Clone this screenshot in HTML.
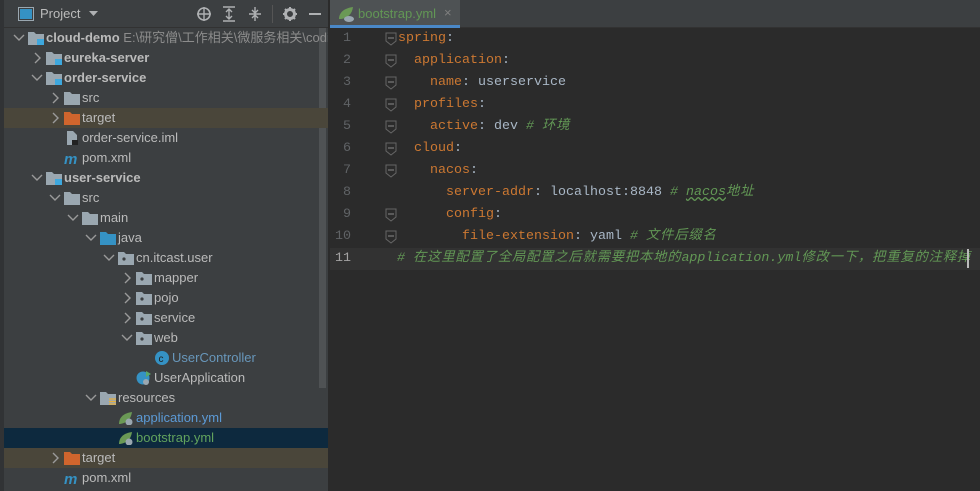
<!DOCTYPE html>
<html><head><meta charset="utf-8"><style>
*{margin:0;padding:0;box-sizing:border-box}
body{width:980px;height:491px;overflow:hidden;background:#2b2b2b;position:relative;font-family:"Liberation Sans","Noto Sans CJK SC",sans-serif}
#side{position:absolute;left:0;top:0;width:328px;height:491px;background:#3c3f41;overflow:hidden}
#strip{position:absolute;left:0;top:0;width:4px;height:491px;background:#313335}
#hdr{position:absolute;left:4px;top:0;width:324px;height:28px;border-bottom:1px solid #323232}
.r{position:absolute;left:4px;width:324px;height:20px;font-size:13px;color:#bbbbbb;line-height:20px;white-space:nowrap}
.r .a{position:absolute;top:0;width:12px;height:20px}
.r .i{position:absolute;top:3px;width:16px;height:14px}
.r .t{position:absolute;top:0}
.b{font-weight:bold}
#ed{position:absolute;left:330px;top:0;width:650px;height:491px}
#tabs{position:absolute;left:0;top:0;width:650px;height:28px;background:#3c3f41;border-bottom:1px solid #323232}
#tab{position:absolute;left:0;top:0;width:130px;height:28px;background:#4e5254}
#tab .ul{position:absolute;left:0;bottom:0;width:130px;height:3px;background:#4a88c7}
.ln{position:absolute;left:0;width:21px;text-align:right;font-family:"Liberation Mono",monospace;font-size:13.33px;color:#606366;line-height:22px}
.cd{position:absolute;left:68px;font-family:"Liberation Mono","Noto Sans CJK SC",monospace;font-size:13.33px;color:#a9b7c6;line-height:22px;white-space:pre}
.k{color:#cc7832}.c{color:#629755;font-style:italic}
.z{letter-spacing:0.8px}
</style></head><body>
<div id="side">
<div id="strip"></div>
<div id="hdr">
<svg style="position:absolute;left:14px;top:7px" width="16" height="14"><rect x="0.5" y="0.5" width="15" height="13" fill="none" stroke="#9aa7b0"/><rect x="2" y="2" width="12" height="10" fill="#3592c4"/></svg>
<span style="position:absolute;left:36px;top:6px;font-size:13px;color:#bbb">Project</span>
<svg style="position:absolute;left:85px;top:11px" width="10" height="6"><path d="M0 0h9l-4.5 5z" fill="#afb1b3"/></svg>
<svg style="position:absolute;left:192px;top:6px" width="16" height="16"><circle cx="8" cy="8" r="6" fill="none" stroke="#afb1b3" stroke-width="1.6"/><path d="M8 1v14M1 8h14" stroke="#afb1b3" stroke-width="1.4"/></svg>
<svg style="position:absolute;left:218px;top:6px" width="14" height="16"><path d="M1 1h12M1 15h12M7 4v8M4 6l3-3 3 3M4 10l3 3 3-3" stroke="#afb1b3" stroke-width="1.4" fill="none"/></svg>
<svg style="position:absolute;left:244px;top:6px" width="14" height="16"><path d="M1 8h12M7 1v5M4 4l3 3 3-3M7 15v-5M4 12l3-3 3 3" stroke="#afb1b3" stroke-width="1.4" fill="none"/></svg>
<div style="position:absolute;left:268px;top:5px;width:1px;height:18px;background:#555"></div>
<svg style="position:absolute;left:278px;top:6px" width="16" height="16"><circle cx="8" cy="8" r="4.5" fill="none" stroke="#afb1b3" stroke-width="3"/><path d="M8 1v3M8 12v3M1 8h3M12 8h3M3 3l2 2M11 11l2 2M13 3l-2 2M3 13l2-2" stroke="#afb1b3" stroke-width="2"/><circle cx="8" cy="8" r="1.8" fill="#3c3f41"/></svg>
<div style="position:absolute;left:305px;top:13px;width:12px;height:2px;background:#afb1b3"></div>
</div>
<div style="position:absolute;left:319px;top:28px;width:7px;height:360px;background:#4f5254"></div>
<div id="tree"></div>
</div>
<div id="ed">
<div id="tabs"><div id="tab">
<svg style="position:absolute;left:8px;top:6px" width="18" height="16"><path d="M1 13C1 6 7 2 15 1c-1 7-5 11-12 12z" fill="#6a9955"/><ellipse cx="11" cy="13" rx="5" ry="3" fill="#9aa7b0"/></svg>
<span style="position:absolute;left:28px;top:6px;font-size:13px;color:#629755">bootstrap.yml</span>
<span style="position:absolute;left:114px;top:5px;font-size:13px;color:#7f7f7f">×</span>
<div class="ul"></div></div></div>
<div style="position:absolute;left:0;top:248px;width:650px;height:22px;background:#323232"></div>
<div id="code"></div>
<div style="position:absolute;left:637px;top:249px;width:2px;height:19px;background:#bbb"></div>
</div>
<script>
var rows=[
[0,'d','mod','cloud-demo',1],[1,'r','mod','eureka-server',1],[1,'d','mod','order-service',1],
[2,'r','fold','src'],[2,'r','tgt','target',0,'#4a463a'],[2,'','iml','order-service.iml'],[2,'','m','pom.xml'],
[1,'d','mod','user-service',1],[2,'d','fold','src'],[3,'d','fold','main'],[4,'d','java','java'],
[5,'d','pkg','cn.itcast.user'],[6,'r','pkg','mapper'],[6,'r','pkg','pojo'],[6,'r','pkg','service'],[6,'d','pkg','web'],
[7,'','cls','UserController',0,0,'#6897bb'],[6,'','app','UserApplication'],[4,'d','res','resources'],
[5,'','spr','application.yml',0,0,'#5c9ad6'],[5,'','spr','bootstrap.yml',0,'#0d293e','#62a35d'],
[2,'r','tgt','target',0,'#4a463a'],[2,'','m','pom.xml']];
var ic={
mod:'<path d="M0 1h6l2 2h8v11H0z" fill="#9aa7b0"/><rect x="9" y="8" width="7" height="6" fill="#3ea8de"/>',
fold:'<path d="M0 1h6l2 2h8v11H0z" fill="#9aa7b0"/>',
tgt:'<path d="M0 1h6l2 2h8v11H0z" fill="#d0652d"/>',
java:'<path d="M0 1h6l2 2h8v11H0z" fill="#3592c4"/>',
pkg:'<path d="M0 1h6l2 2h8v11H0z" fill="#9aa7b0"/><circle cx="6" cy="8" r="1.6" fill="#3c3f41"/>',
res:'<path d="M0 1h6l2 2h8v11H0z" fill="#9aa7b0"/><path d="M9 8h7M9 10.5h7M9 13h7" stroke="#e8b03c" stroke-width="1.2"/>',
iml:'<path d="M3 0h6l4 4v10H3z" fill="#9aa7b0"/><rect x="8" y="9" width="6" height="5" fill="#222"/>',
m:'<text x="0" y="13" font-size="15" font-weight="bold" font-style="italic" fill="#3592c4" font-family="Liberation Sans">m</text>',
cls:'<circle cx="8" cy="7" r="7" fill="#3592c4"/><text x="4.5" y="11" font-size="10" fill="#222" font-family="Liberation Sans">c</text>',
app:'<circle cx="7" cy="7" r="6.5" fill="#3592c4"/><path d="M10 0l5 3-5 3z" fill="#59a869"/><circle cx="10" cy="11" r="3" fill="#9aa7b0"/>',
spr:'<path d="M1 13C1 6 6 2 14 1c-1 7-5 11-12 12z" fill="#6a9955"/><circle cx="11" cy="11" r="3.5" fill="#9aa7b0"/>'};
var h='';
rows.forEach(function(r,i){var L=r[0],y=28+20*i;
h+='<div class="r" style="top:'+y+'px;'+(r[5]?'background:'+r[5]:'')+'">';
var ax=9+18*L;
if(r[1]=='d')h+='<svg class="a" style="left:'+ax+'px" width="12" height="20"><path d="M1 7l5 5 5-5" stroke="#9a9a9a" stroke-width="1.4" fill="none"/></svg>';
if(r[1]=='r')h+='<svg class="a" style="left:'+ax+'px" width="12" height="20"><path d="M4 5l5 5-5 5" stroke="#9a9a9a" stroke-width="1.4" fill="none"/></svg>';
h+='<svg class="i" style="left:'+(24+18*L)+'px" width="16" height="15">'+ic[r[2]]+'</svg>';
h+='<span class="t'+(r[4]?' b':'')+'" style="left:'+(42+18*L)+'px;'+(r[6]?'color:'+r[6]:'')+'">'+r[3]+(i==0?' <span style="font-weight:normal;color:#8c8c8c">E:\\研究僧\\工作相关\\微服务相关\\coding</span>':'')+'</span></div>';});
document.getElementById('tree').innerHTML=h;
var code=[
'<span class="k">spring</span>:','  <span class="k">application</span>:','    <span class="k">name</span>: userservice','  <span class="k">profiles</span>:',
'    <span class="k">active</span>: dev <span class="c"># <span class="z">环境</span></span>','  <span class="k">cloud</span>:','    <span class="k">nacos</span>:',
'      <span class="k">server-addr</span>: localhost:8848 <span class="c"># <span style="text-decoration:underline wavy #629755">nacos</span><span class="z">地址</span></span>',
'      <span class="k">config</span>:','        <span class="k">file-extension</span>: yaml <span class="c"># <span class="z">文件后缀名</span></span>',
'<span class="c"># <span class="z">在这里配置了全局配置之后就需要把本地的</span>application.yml<span class="z">修改一下，把重复的注释掉</span></span>'];
var folds=[0,1,2,3,4,5,6,8,9],c='';
code.forEach(function(s,i){var y=28+22*i;
c+='<div class="ln" style="top:'+y+'px;'+(i==10?'color:#a4a3a3':'')+'">'+(i+1)+'</div>';
c+='<div class="cd" style="top:'+y+'px;'+(i==10?'left:67px':'')+'">'+s+'</div>';
if(folds.indexOf(i)>=0)c+='<svg style="position:absolute;left:55px;top:'+(y+4)+'px" width="12" height="14"><path d="M1 1h10v8l-5 4-5-4z" fill="#2b2b2b" stroke="#666"/><path d="M3 6h6" stroke="#888"/></svg>';});
document.getElementById('code').innerHTML=c;
</script>
</body></html>
